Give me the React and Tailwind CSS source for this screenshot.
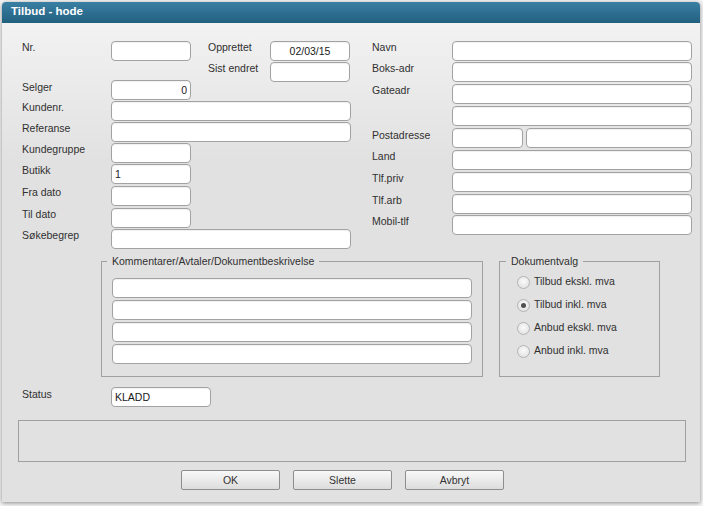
import React from "react";

const FONT = "font-['Liberation_Sans',Arial,sans-serif]";

function Field({ w, value = "", align = "text-left", className = "" }) {
  return (
    <input
      readOnly
      value={value}
      className={`h-[20px] ${w} ${align} ${className} shrink-0 rounded-[4px] border border-[#a2a2a2] bg-white px-[3px] text-[10.5px] leading-[18px] text-[#1a1a1a] shadow-[inset_0_1px_1px_rgba(0,0,0,0.06)] outline-none ${FONT}`}
    />
  );
}

function Label({ children, w }) {
  return (
    <div className={`${w} shrink-0 text-[10.5px] leading-[13px] text-[#303030]`}>{children}</div>
  );
}

function Radio({ checked, label }) {
  return (
    <div className="flex h-[23px] items-center">
      <div className="ml-[6px] mt-[2px] flex h-[13px] w-[13px] shrink-0 items-center justify-center rounded-full border border-[#b4b4b4] bg-[radial-gradient(circle_at_50%_40%,#fbfbfb,#dcdcdc)]">
        {checked && <div className="h-[5px] w-[5px] rounded-full bg-[#505050]" />}
      </div>
      <div className="ml-[4px] text-[10.5px] leading-[13px] text-[#303030]">{label}</div>
    </div>
  );
}

function Btn({ children }) {
  return (
    <button className="h-[20px] w-[99px] rounded-[2px] border border-[#8e8e8e] bg-[linear-gradient(to_bottom,#f8f8f8,#dddddd)] text-[10.5px] leading-[18px] text-[#333]">
      {children}
    </button>
  );
}

export default function App() {
  return (
    <div className={`h-[506px] w-[703px] overflow-hidden bg-[#f4f4f4] ${FONT}`}>
      <div className="ml-[2px] mt-[2px] flex h-[500px] w-[698px] flex-col overflow-hidden rounded-t-[4px] shadow-[0_1px_4px_rgba(0,0,0,0.45)]">
        <div className="flex h-[21px] shrink-0 items-center bg-[linear-gradient(to_bottom,#3a7fa4,#22607f)] pl-[9px] pb-[2px] text-[11.5px] font-bold text-white">
          Tilbud - hode
        </div>
        <div className="flex flex-1 flex-col bg-[linear-gradient(to_bottom,#f2f2f2,#e1e1e1_140px,#e1e1e1)] pl-[20px] pt-[18px]">
          <div className="flex">
            {/* left block */}
            <div className="flex w-[328px] flex-col">
              <div className="flex h-[20px] items-start">
                <Label w="w-[89px]">Nr.</Label>
                <Field w="w-[80px]" />
                <div className="w-[17px]" />
                <Label w="w-[62px]">Opprettet</Label>
                <Field w="w-[80px]" value="02/03/15" align="text-center" />
              </div>
              <div className="mt-[1px] flex h-[20px] items-start">
                <div className="w-[186px]" />
                <Label w="w-[62px]">Sist endret</Label>
                <Field w="w-[80px]" />
              </div>
              <div className="mt-[-2px] flex h-[20px] items-start">
                <div className="w-[89px] shrink-0 pt-[1px] text-[10.5px] leading-[13px] text-[#303030]">Selger</div>
                <Field w="w-[80px]" value="0" align="text-right" />
              </div>
              <div className="mt-[1px] flex h-[20px] items-start">
                <Label w="w-[89px]">Kundenr.</Label>
                <Field w="w-[240px]" />
              </div>
              <div className="mt-[1px] flex h-[20px] items-start">
                <Label w="w-[89px]">Referanse</Label>
                <Field w="w-[240px]" />
              </div>
              <div className="mt-[1px] flex h-[20px] items-start">
                <Label w="w-[89px]">Kundegruppe</Label>
                <Field w="w-[80px]" />
              </div>
              <div className="mt-[1px] flex h-[20px] items-start">
                <Label w="w-[89px]">Butikk</Label>
                <Field w="w-[80px]" value="1" />
              </div>
              <div className="mt-[2px] flex h-[20px] items-start">
                <Label w="w-[89px]">Fra dato</Label>
                <Field w="w-[80px]" />
              </div>
              <div className="mt-[2px] flex h-[20px] items-start">
                <Label w="w-[89px]">Til dato</Label>
                <Field w="w-[80px]" />
              </div>
              <div className="mt-[1px] flex h-[20px] items-start">
                <Label w="w-[89px]">Søkebegrep</Label>
                <Field w="w-[240px]" />
              </div>
            </div>
            {/* right block */}
            <div className="ml-[22px] flex w-[320px] flex-col">
              <div className="flex h-[20px] items-start">
                <Label w="w-[80px]">Navn</Label>
                <Field w="w-[240px]" />
              </div>
              <div className="mt-[1px] flex h-[20px] items-start">
                <Label w="w-[80px]">Boks-adr</Label>
                <Field w="w-[240px]" />
              </div>
              <div className="mt-[2px] flex h-[20px] items-start">
                <Label w="w-[80px]">Gateadr</Label>
                <Field w="w-[240px]" />
              </div>
              <div className="mt-[2px] flex h-[20px] items-start">
                <Label w="w-[80px]"></Label>
                <Field w="w-[240px]" />
              </div>
              <div className="mt-[2px] flex h-[20px] items-start">
                <div className="w-[80px] shrink-0 pt-[1px] text-[10.5px] leading-[13px] text-[#303030]">Postadresse</div>
                <Field w="w-[71px]" />
                <Field w="w-[166px]" className="ml-[3px]" />
              </div>
              <div className="mt-[2px] flex h-[20px] items-start">
                <Label w="w-[80px]">Land</Label>
                <Field w="w-[240px]" />
              </div>
              <div className="mt-[2px] flex h-[20px] items-start">
                <Label w="w-[80px]">Tlf.priv</Label>
                <Field w="w-[240px]" />
              </div>
              <div className="mt-[2px] flex h-[20px] items-start">
                <Label w="w-[80px]">Tlf.arb</Label>
                <Field w="w-[240px]" />
              </div>
              <div className="mt-[1px] flex h-[20px] items-start">
                <Label w="w-[80px]">Mobil-tlf</Label>
                <Field w="w-[240px]" />
              </div>
            </div>
          </div>

          {/* fieldsets */}
          <div className="mt-[6px] flex items-start">
            <fieldset className="ml-[79px] box-border h-[122px] w-[381px] border border-[#a0a0a0] px-[10px]">
              <legend className="ml-[-5px] px-[5px] text-[10.5px] leading-[13px] text-[#303030]">
                Kommentarer/Avtaler/Dokumentbeskrivelse
              </legend>
              <div className="mt-[10px] flex flex-col gap-[2px]">
                <Field w="w-[360px]" />
                <Field w="w-[360px]" />
                <Field w="w-[360px]" />
                <Field w="w-[360px]" />
              </div>
            </fieldset>
            <fieldset className="ml-[16px] box-border h-[122px] w-[161px] border border-[#a0a0a0] pl-[11px]">
              <legend className="ml-[-5px] px-[5px] text-[10.5px] leading-[13px] text-[#303030]">
                Dokumentvalg
              </legend>
              <div className="mt-[2px] flex flex-col">
                <Radio label="Tilbud ekskl. mva" />
                <Radio label="Tilbud inkl. mva" checked />
                <Radio label="Anbud ekskl. mva" />
                <Radio label="Anbud inkl. mva" />
              </div>
            </fieldset>
          </div>

          <div className="mt-[10px] flex h-[20px] items-start">
            <div className="w-[89px] shrink-0 pt-[1px] text-[10.5px] leading-[13px] text-[#303030]">Status</div>
            <Field w="w-[100px]" value="KLADD" />
          </div>

          <div className="ml-[-4px] mt-[13px] h-[42px] w-[668px] border border-[#a0a0a0]" />

          <div className="ml-[159px] mt-[8px] flex gap-[13px]">
            <Btn>OK</Btn>
            <Btn>Slette</Btn>
            <Btn>Avbryt</Btn>
          </div>
        </div>
      </div>
    </div>
  );
}
